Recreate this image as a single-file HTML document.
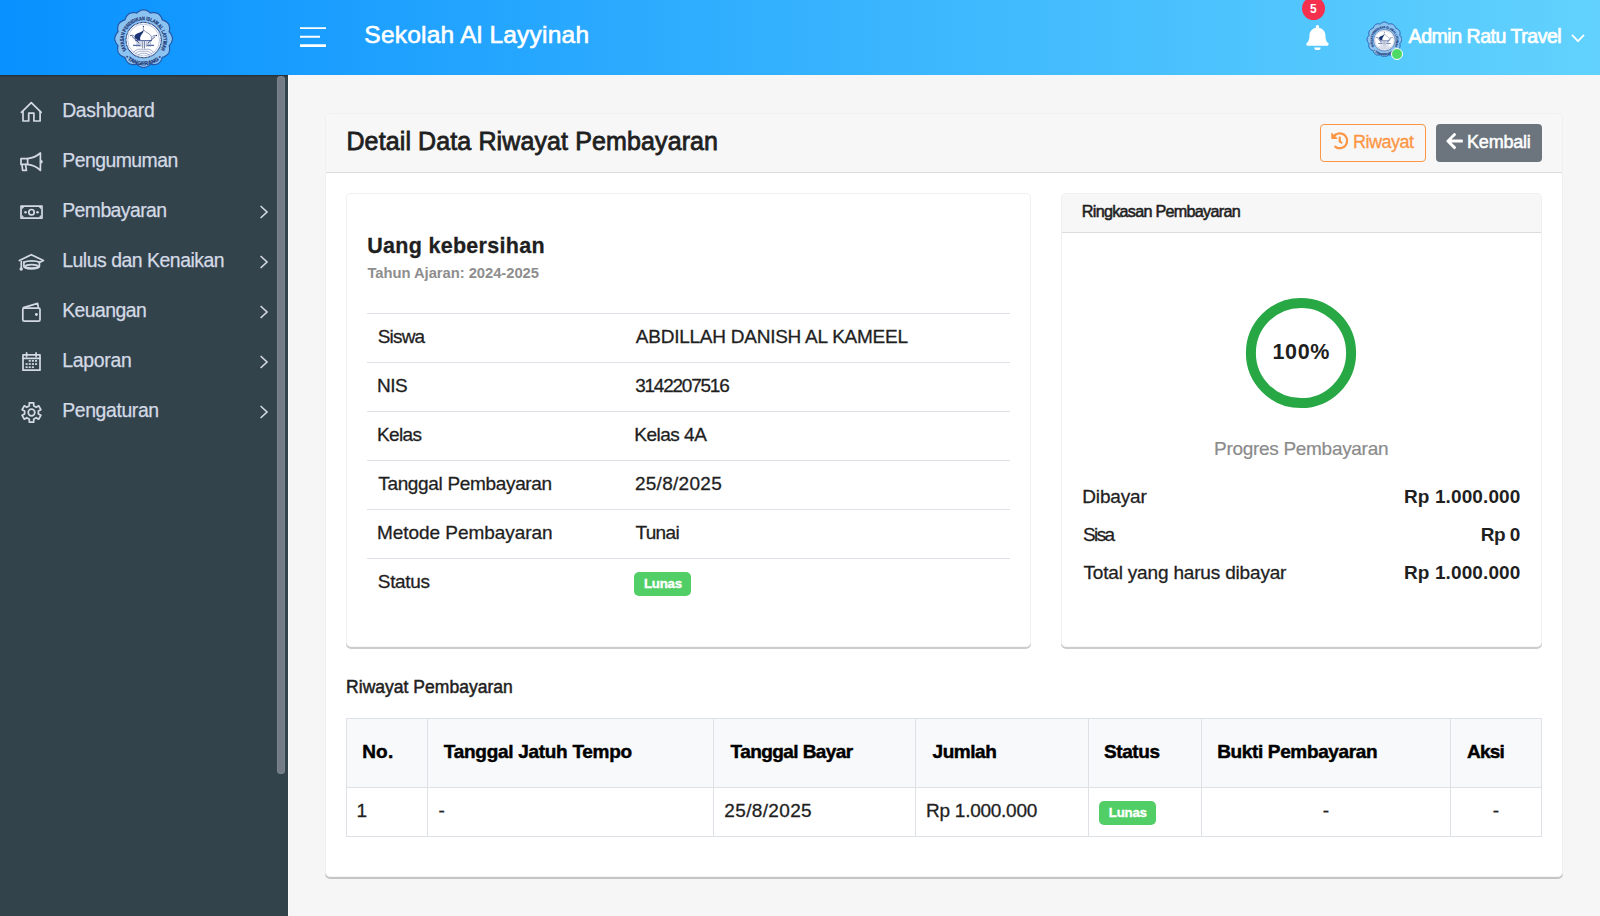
<!DOCTYPE html><html lang="id"><head><meta charset="utf-8"><title>Detail Data Riwayat Pembayaran - Sekolah Al Layyinah</title><style>
*{box-sizing:border-box;margin:0;padding:0}
html,body{width:1600px;height:916px;overflow:hidden}
body{position:relative;background:#f6f6f6;font-family:"Liberation Sans",sans-serif;color:#1f1f1f}
div,header,aside,main,section,nav,ul,li,a,span,h1,h2,h3,h4,p,svg,i,b{position:absolute;display:block}
ul{list-style:none}
table{position:absolute;border-collapse:separate;border-spacing:0;table-layout:fixed}
th,td{padding:0;text-align:left;font-weight:400}
.t{white-space:nowrap;line-height:1;font-weight:400;font-style:normal}
a{color:inherit;text-decoration:none}
.pb{position:static;display:inline-block;width:0;height:0}
#topbar{left:0;top:0;width:1600px;height:75px;background:linear-gradient(to right,#0891ff,#62d2fd);z-index:3}
#sidebar{left:0;top:75px;width:288px;height:841px;background:#33434c;box-shadow:inset 0 2px 2px -1px rgba(0,0,0,.32)}
#main{left:288px;top:75px;width:1312px;height:841px;border-left:1px solid #fbfbfb}
.card{background:#fff;border:1px solid #f0f0f0;border-bottom-color:#f6f6f6;border-radius:5px;box-shadow:0 2px 0 rgba(0,0,0,.2)}
.card-h{background:#f7f7f7;border-bottom:1px solid #dcdcdc;border-radius:4px 4px 0 0}
.hr{height:1px;background:#dee2e6}
.badge{background:#51cf66;border-radius:5px}
.tbl{border-left:1px solid #dee2e6;border-top:1px solid #dee2e6}
.tbl th,.tbl td{border-right:1px solid #dee2e6;border-bottom:1px solid #dee2e6}
.tbl th{background:#f8f9fa}
.dl td{border-top:1px solid #dee2e6}
</style></head><body><header id="topbar"><a class="brand" style="left:0;top:0;width:288px;height:75px"><svg style="left:113.47px;top:7.57px;width:61.27px;height:61.27px" viewBox="-30.63 -30.63 61.27 61.27"><path d="M0.00,-28.90 L0.50,-28.83 L1.00,-28.74 L1.50,-28.62 L1.99,-28.49 L2.48,-28.33 L2.96,-28.15 L3.43,-27.94 L3.90,-27.71 L4.35,-27.47 L4.80,-27.20 L5.23,-26.91 L5.65,-26.60 L6.06,-26.26 L6.46,-25.91 L6.84,-25.54 L7.36,-25.67 L7.88,-25.78 L8.40,-25.86 L8.92,-25.92 L9.45,-25.95 L9.97,-25.96 L10.48,-25.95 L11.00,-25.91 L11.51,-25.85 L12.02,-25.77 L12.52,-25.67 L13.01,-25.54 L13.50,-25.39 L13.98,-25.22 L14.45,-25.03 L14.85,-24.72 L15.24,-24.39 L15.61,-24.04 L15.97,-23.67 L16.31,-23.29 L16.63,-22.90 L16.94,-22.48 L17.23,-22.05 L17.50,-21.61 L17.75,-21.16 L17.98,-20.69 L18.19,-20.21 L18.38,-19.71 L18.55,-19.21 L18.70,-18.70 L19.21,-18.55 L19.71,-18.38 L20.21,-18.19 L20.69,-17.98 L21.16,-17.75 L21.61,-17.50 L22.05,-17.23 L22.48,-16.94 L22.90,-16.63 L23.29,-16.31 L23.67,-15.97 L24.04,-15.61 L24.39,-15.24 L24.72,-14.85 L25.03,-14.45 L25.22,-13.98 L25.39,-13.50 L25.54,-13.01 L25.67,-12.52 L25.77,-12.02 L25.85,-11.51 L25.91,-11.00 L25.95,-10.48 L25.96,-9.97 L25.95,-9.45 L25.92,-8.92 L25.86,-8.40 L25.78,-7.88 L25.67,-7.36 L25.54,-6.84 L25.91,-6.46 L26.26,-6.06 L26.60,-5.65 L26.91,-5.23 L27.20,-4.80 L27.47,-4.35 L27.71,-3.90 L27.94,-3.43 L28.15,-2.96 L28.33,-2.48 L28.49,-1.99 L28.62,-1.50 L28.74,-1.00 L28.83,-0.50 L28.90,-0.00 L28.83,0.50 L28.74,1.00 L28.62,1.50 L28.49,1.99 L28.33,2.48 L28.15,2.96 L27.94,3.43 L27.71,3.90 L27.47,4.35 L27.20,4.80 L26.91,5.23 L26.60,5.65 L26.26,6.06 L25.91,6.46 L25.54,6.84 L25.67,7.36 L25.78,7.88 L25.86,8.40 L25.92,8.92 L25.95,9.45 L25.96,9.97 L25.95,10.48 L25.91,11.00 L25.85,11.51 L25.77,12.02 L25.67,12.52 L25.54,13.01 L25.39,13.50 L25.22,13.98 L25.03,14.45 L24.72,14.85 L24.39,15.24 L24.04,15.61 L23.67,15.97 L23.29,16.31 L22.90,16.63 L22.48,16.94 L22.05,17.23 L21.61,17.50 L21.16,17.75 L20.69,17.98 L20.21,18.19 L19.71,18.38 L19.21,18.55 L18.70,18.70 L18.55,19.21 L18.38,19.71 L18.19,20.21 L17.98,20.69 L17.75,21.16 L17.50,21.61 L17.23,22.05 L16.94,22.48 L16.63,22.90 L16.31,23.29 L15.97,23.67 L15.61,24.04 L15.24,24.39 L14.85,24.72 L14.45,25.03 L13.98,25.22 L13.50,25.39 L13.01,25.54 L12.52,25.67 L12.02,25.77 L11.51,25.85 L11.00,25.91 L10.48,25.95 L9.97,25.96 L9.45,25.95 L8.92,25.92 L8.40,25.86 L7.88,25.78 L7.36,25.67 L6.84,25.54 L6.46,25.91 L6.06,26.26 L5.65,26.60 L5.23,26.91 L4.80,27.20 L4.35,27.47 L3.90,27.71 L3.43,27.94 L2.96,28.15 L2.48,28.33 L1.99,28.49 L1.50,28.62 L1.00,28.74 L0.50,28.83 L0.00,28.90 L-0.50,28.83 L-1.00,28.74 L-1.50,28.62 L-1.99,28.49 L-2.48,28.33 L-2.96,28.15 L-3.43,27.94 L-3.90,27.71 L-4.35,27.47 L-4.80,27.20 L-5.23,26.91 L-5.65,26.60 L-6.06,26.26 L-6.46,25.91 L-6.84,25.54 L-7.36,25.67 L-7.88,25.78 L-8.40,25.86 L-8.92,25.92 L-9.45,25.95 L-9.97,25.96 L-10.48,25.95 L-11.00,25.91 L-11.51,25.85 L-12.02,25.77 L-12.52,25.67 L-13.01,25.54 L-13.50,25.39 L-13.98,25.22 L-14.45,25.03 L-14.85,24.72 L-15.24,24.39 L-15.61,24.04 L-15.97,23.67 L-16.31,23.29 L-16.63,22.90 L-16.94,22.48 L-17.23,22.05 L-17.50,21.61 L-17.75,21.16 L-17.98,20.69 L-18.19,20.21 L-18.38,19.71 L-18.55,19.21 L-18.70,18.70 L-19.21,18.55 L-19.71,18.38 L-20.21,18.19 L-20.69,17.98 L-21.16,17.75 L-21.61,17.50 L-22.05,17.23 L-22.48,16.94 L-22.90,16.63 L-23.29,16.31 L-23.67,15.97 L-24.04,15.61 L-24.39,15.24 L-24.72,14.85 L-25.03,14.45 L-25.22,13.98 L-25.39,13.50 L-25.54,13.01 L-25.67,12.52 L-25.77,12.02 L-25.85,11.51 L-25.91,11.00 L-25.95,10.48 L-25.96,9.97 L-25.95,9.45 L-25.92,8.92 L-25.86,8.40 L-25.78,7.88 L-25.67,7.36 L-25.54,6.84 L-25.91,6.46 L-26.26,6.06 L-26.60,5.65 L-26.91,5.23 L-27.20,4.80 L-27.47,4.35 L-27.71,3.90 L-27.94,3.43 L-28.15,2.96 L-28.33,2.48 L-28.49,1.99 L-28.62,1.50 L-28.74,1.00 L-28.83,0.50 L-28.90,0.00 L-28.83,-0.50 L-28.74,-1.00 L-28.62,-1.50 L-28.49,-1.99 L-28.33,-2.48 L-28.15,-2.96 L-27.94,-3.43 L-27.71,-3.90 L-27.47,-4.35 L-27.20,-4.80 L-26.91,-5.23 L-26.60,-5.65 L-26.26,-6.06 L-25.91,-6.46 L-25.54,-6.84 L-25.67,-7.36 L-25.78,-7.88 L-25.86,-8.40 L-25.92,-8.92 L-25.95,-9.45 L-25.96,-9.97 L-25.95,-10.48 L-25.91,-11.00 L-25.85,-11.51 L-25.77,-12.02 L-25.67,-12.52 L-25.54,-13.01 L-25.39,-13.50 L-25.22,-13.98 L-25.03,-14.45 L-24.72,-14.85 L-24.39,-15.24 L-24.04,-15.61 L-23.67,-15.97 L-23.29,-16.31 L-22.90,-16.63 L-22.48,-16.94 L-22.05,-17.23 L-21.61,-17.50 L-21.16,-17.75 L-20.69,-17.98 L-20.21,-18.19 L-19.71,-18.38 L-19.21,-18.55 L-18.70,-18.70 L-18.55,-19.21 L-18.38,-19.71 L-18.19,-20.21 L-17.98,-20.69 L-17.75,-21.16 L-17.50,-21.61 L-17.23,-22.05 L-16.94,-22.48 L-16.63,-22.90 L-16.31,-23.29 L-15.97,-23.67 L-15.61,-24.04 L-15.24,-24.39 L-14.85,-24.72 L-14.45,-25.03 L-13.98,-25.22 L-13.50,-25.39 L-13.01,-25.54 L-12.52,-25.67 L-12.02,-25.77 L-11.51,-25.85 L-11.00,-25.91 L-10.48,-25.95 L-9.97,-25.96 L-9.45,-25.95 L-8.92,-25.92 L-8.40,-25.86 L-7.88,-25.78 L-7.36,-25.67 L-6.84,-25.54 L-6.46,-25.91 L-6.06,-26.26 L-5.65,-26.60 L-5.23,-26.91 L-4.80,-27.20 L-4.35,-27.47 L-3.90,-27.71 L-3.43,-27.94 L-2.96,-28.15 L-2.48,-28.33 L-1.99,-28.49 L-1.50,-28.62 L-1.00,-28.74 L-0.50,-28.83Z" fill="#8cc3f1" stroke="#2456a6" stroke-width="1.20" stroke-linejoin="round"/><circle cx="0" cy="1.40" r="17.60" fill="#fff" stroke="#1c3474" stroke-width="1.20" stroke-dasharray="0.90 0.50"/><circle cx="0" cy="1.40" r="15.90" fill="none" stroke="#6b86c0" stroke-width="0.45"/><defs><path id="lta" d="M-16.79,11.89 A19.80,19.80 0 1 1 16.79,11.89"/><path id="lba" d="M-18.43,18.59 A25.20,25.20 0 0 0 18.43,18.59"/></defs><text font-family="Liberation Sans, sans-serif" font-weight="700" font-size="5.20" fill="#1c3474" stroke="#1c3474" stroke-width="0.22"><textPath href="#lta" textLength="83.06" lengthAdjust="spacingAndGlyphs">YAYASAN PENDIDIKAN ISLAM AL LAYYINAH</textPath></text><text font-family="Liberation Sans, sans-serif" font-weight="700" font-size="5.30" fill="#1c3474" stroke="#1c3474" stroke-width="0.22"><textPath href="#lba" textLength="40.52" lengthAdjust="spacingAndGlyphs">• TANGERANG •</textPath></text><g transform="translate(0,1.40) scale(1.000)"><path d="M-0.1,-10.8 C-1.6,-6.4 -9.6,-7.6 -9,-2.8 C-8.7,-0.8 -6.6,0.2 -3.2,0 C-4.4,-2.6 -2.6,-5 -0.7,-7.4 C-0.1,-8.4 0,-9.6 -0.1,-10.8Z" fill="#1c3474"/><path d="M-0.2,-10.4 C2.2,-6.6 9.4,-6.6 7.6,-0.4" fill="none" stroke="#1c3474" stroke-width="0.5"/><path d="M-0.9,-14.6 l1.5,1.1 l-1.2,0.9z" fill="#1c3474"/><path d="M-0.3,-13 V-10.4" stroke="#1c3474" stroke-width="0.4"/><path d="M-8.4,0.6 H8.4" stroke="#51679f" stroke-width="1.1" fill="none"/><path d="M-10.6,5.4 H-3 M3,5.4 H10.4" stroke="#51679f" stroke-width="1.2" fill="none"/><path d="M-6.6,1.4 V7 M-4.6,1.4 V7 M-2.6,1.4 V7 M2.6,1.4 V7 M4.6,1.4 V7 M6.6,1.4 V7" stroke="#6d80b2" stroke-width="0.6" fill="none"/><path d="M-0.9,1.2 V8.6 M0.9,1.2 V8.6" stroke="#1c3474" stroke-width="0.6" fill="none"/><path d="M-11.6,-3.6 L-4.4,3.2 M11.4,-3.4 L4,3.4" stroke="#1c3474" stroke-width="0.8" fill="none"/><path d="M-12.2,-4.6 c1.4,-0.6 3,0.4 3.4,1.8 M12,-4.4 c-1.4,-0.6 -3,0.4 -3.4,1.8" stroke="#1c3474" stroke-width="0.6" fill="none"/><path d="M-10.4,12.6 C-7,8.4 -3,8.6 0,10 C3,8.6 7,8.4 10,12.6 M-8.4,14 C-5,10.6 -2,10.8 0,11.8 C2,10.8 5,10.6 8.2,14 M-6,15.2 C-3,13 -1.4,13 0,13.6 C1.4,13 3,13 6,15.2" stroke="#4a5f9a" stroke-width="0.5" fill="none"/><circle cx="-12.7" cy="-4.6" r="0.75" fill="#1c3474"/><circle cx="12.7" cy="-4.6" r="0.75" fill="#1c3474"/></g></svg></a><svg style="left:296px;top:22px;width:34px;height:30px;" viewBox="296 22 34 30"><path fill="#fff" d="M300,27.3h26v1.6h-26z M300,35.7h20v2h-20z M300,44.3h26v2.6h-26z"/></svg><h1 class="t" style="left:364.32px;top:23.00px;font-size:24.5px;letter-spacing:0.228px;color:#fff;-webkit-text-stroke:0.6px;">Sekolah Al Layyinah</h1><svg style="left:1305.8px;top:24.9px;width:22.9px;height:25.6px;" viewBox="0 0 448 512"><path fill="#fff" d="M224 512c35.32 0 63.97-28.65 63.97-64H160.03c0 35.35 28.65 64 63.97 64zm215.39-149.71c-19.32-20.76-55.47-51.99-55.47-154.29 0-77.7-54.48-139.9-127.94-155.16V32c0-17.67-14.32-32-31.98-32s-31.98 14.33-31.98 32v20.84C118.56 68.1 64.08 130.3 64.08 208c0 102.3-36.15 133.53-55.47 154.29-6 6.45-8.66 14.16-8.61 21.71.11 16.4 12.98 32 32.1 32h383.8c19.12 0 32-15.6 32.1-32 .05-7.55-2.61-15.27-8.61-21.71z"/></svg><div class="count" style="left:1301.9px;top:-2.6px;width:22.9px;height:22.9px;background:#f5304f;border-radius:50%"><span class="t" style="left:8.04px;top:5.60px;font-size:12px;font-weight:700;color:#fff;">5</span></div><svg style="left:1365.56px;top:20.56px;width:36.89px;height:36.89px" viewBox="-18.44 -18.44 36.89 36.89"><path d="M0.00,-17.40 L0.30,-17.36 L0.60,-17.30 L0.90,-17.23 L1.20,-17.15 L1.49,-17.06 L1.78,-16.95 L2.07,-16.82 L2.35,-16.69 L2.62,-16.54 L2.89,-16.38 L3.15,-16.20 L3.40,-16.01 L3.65,-15.81 L3.89,-15.60 L4.12,-15.38 L4.43,-15.46 L4.74,-15.52 L5.06,-15.57 L5.37,-15.60 L5.69,-15.62 L6.00,-15.63 L6.31,-15.62 L6.62,-15.60 L6.93,-15.57 L7.24,-15.52 L7.54,-15.45 L7.83,-15.38 L8.13,-15.29 L8.42,-15.18 L8.70,-15.07 L8.94,-14.88 L9.17,-14.68 L9.40,-14.47 L9.61,-14.25 L9.82,-14.02 L10.02,-13.78 L10.20,-13.54 L10.37,-13.28 L10.54,-13.01 L10.69,-12.74 L10.83,-12.46 L10.95,-12.17 L11.07,-11.87 L11.17,-11.57 L11.26,-11.26 L11.57,-11.17 L11.87,-11.07 L12.17,-10.95 L12.46,-10.83 L12.74,-10.69 L13.01,-10.54 L13.28,-10.37 L13.54,-10.20 L13.78,-10.02 L14.02,-9.82 L14.25,-9.61 L14.47,-9.40 L14.68,-9.17 L14.88,-8.94 L15.07,-8.70 L15.18,-8.42 L15.29,-8.13 L15.38,-7.83 L15.45,-7.54 L15.52,-7.24 L15.57,-6.93 L15.60,-6.62 L15.62,-6.31 L15.63,-6.00 L15.62,-5.69 L15.60,-5.37 L15.57,-5.06 L15.52,-4.74 L15.46,-4.43 L15.38,-4.12 L15.60,-3.89 L15.81,-3.65 L16.01,-3.40 L16.20,-3.15 L16.38,-2.89 L16.54,-2.62 L16.69,-2.35 L16.82,-2.07 L16.95,-1.78 L17.06,-1.49 L17.15,-1.20 L17.23,-0.90 L17.30,-0.60 L17.36,-0.30 L17.40,-0.00 L17.36,0.30 L17.30,0.60 L17.23,0.90 L17.15,1.20 L17.06,1.49 L16.95,1.78 L16.82,2.07 L16.69,2.35 L16.54,2.62 L16.38,2.89 L16.20,3.15 L16.01,3.40 L15.81,3.65 L15.60,3.89 L15.38,4.12 L15.46,4.43 L15.52,4.74 L15.57,5.06 L15.60,5.37 L15.62,5.69 L15.63,6.00 L15.62,6.31 L15.60,6.62 L15.57,6.93 L15.52,7.24 L15.45,7.54 L15.38,7.83 L15.29,8.13 L15.18,8.42 L15.07,8.70 L14.88,8.94 L14.68,9.17 L14.47,9.40 L14.25,9.61 L14.02,9.82 L13.78,10.02 L13.54,10.20 L13.28,10.37 L13.01,10.54 L12.74,10.69 L12.46,10.83 L12.17,10.95 L11.87,11.07 L11.57,11.17 L11.26,11.26 L11.17,11.57 L11.07,11.87 L10.95,12.17 L10.83,12.46 L10.69,12.74 L10.54,13.01 L10.37,13.28 L10.20,13.54 L10.02,13.78 L9.82,14.02 L9.61,14.25 L9.40,14.47 L9.17,14.68 L8.94,14.88 L8.70,15.07 L8.42,15.18 L8.13,15.29 L7.83,15.38 L7.54,15.45 L7.24,15.52 L6.93,15.57 L6.62,15.60 L6.31,15.62 L6.00,15.63 L5.69,15.62 L5.37,15.60 L5.06,15.57 L4.74,15.52 L4.43,15.46 L4.12,15.38 L3.89,15.60 L3.65,15.81 L3.40,16.01 L3.15,16.20 L2.89,16.38 L2.62,16.54 L2.35,16.69 L2.07,16.82 L1.78,16.95 L1.49,17.06 L1.20,17.15 L0.90,17.23 L0.60,17.30 L0.30,17.36 L0.00,17.40 L-0.30,17.36 L-0.60,17.30 L-0.90,17.23 L-1.20,17.15 L-1.49,17.06 L-1.78,16.95 L-2.07,16.82 L-2.35,16.69 L-2.62,16.54 L-2.89,16.38 L-3.15,16.20 L-3.40,16.01 L-3.65,15.81 L-3.89,15.60 L-4.12,15.38 L-4.43,15.46 L-4.74,15.52 L-5.06,15.57 L-5.37,15.60 L-5.69,15.62 L-6.00,15.63 L-6.31,15.62 L-6.62,15.60 L-6.93,15.57 L-7.24,15.52 L-7.54,15.45 L-7.83,15.38 L-8.13,15.29 L-8.42,15.18 L-8.70,15.07 L-8.94,14.88 L-9.17,14.68 L-9.40,14.47 L-9.61,14.25 L-9.82,14.02 L-10.02,13.78 L-10.20,13.54 L-10.37,13.28 L-10.54,13.01 L-10.69,12.74 L-10.83,12.46 L-10.95,12.17 L-11.07,11.87 L-11.17,11.57 L-11.26,11.26 L-11.57,11.17 L-11.87,11.07 L-12.17,10.95 L-12.46,10.83 L-12.74,10.69 L-13.01,10.54 L-13.28,10.37 L-13.54,10.20 L-13.78,10.02 L-14.02,9.82 L-14.25,9.61 L-14.47,9.40 L-14.68,9.17 L-14.88,8.94 L-15.07,8.70 L-15.18,8.42 L-15.29,8.13 L-15.38,7.83 L-15.45,7.54 L-15.52,7.24 L-15.57,6.93 L-15.60,6.62 L-15.62,6.31 L-15.63,6.00 L-15.62,5.69 L-15.60,5.37 L-15.57,5.06 L-15.52,4.74 L-15.46,4.43 L-15.38,4.12 L-15.60,3.89 L-15.81,3.65 L-16.01,3.40 L-16.20,3.15 L-16.38,2.89 L-16.54,2.62 L-16.69,2.35 L-16.82,2.07 L-16.95,1.78 L-17.06,1.49 L-17.15,1.20 L-17.23,0.90 L-17.30,0.60 L-17.36,0.30 L-17.40,0.00 L-17.36,-0.30 L-17.30,-0.60 L-17.23,-0.90 L-17.15,-1.20 L-17.06,-1.49 L-16.95,-1.78 L-16.82,-2.07 L-16.69,-2.35 L-16.54,-2.62 L-16.38,-2.89 L-16.20,-3.15 L-16.01,-3.40 L-15.81,-3.65 L-15.60,-3.89 L-15.38,-4.12 L-15.46,-4.43 L-15.52,-4.74 L-15.57,-5.06 L-15.60,-5.37 L-15.62,-5.69 L-15.63,-6.00 L-15.62,-6.31 L-15.60,-6.62 L-15.57,-6.93 L-15.52,-7.24 L-15.45,-7.54 L-15.38,-7.83 L-15.29,-8.13 L-15.18,-8.42 L-15.07,-8.70 L-14.88,-8.94 L-14.68,-9.17 L-14.47,-9.40 L-14.25,-9.61 L-14.02,-9.82 L-13.78,-10.02 L-13.54,-10.20 L-13.28,-10.37 L-13.01,-10.54 L-12.74,-10.69 L-12.46,-10.83 L-12.17,-10.95 L-11.87,-11.07 L-11.57,-11.17 L-11.26,-11.26 L-11.17,-11.57 L-11.07,-11.87 L-10.95,-12.17 L-10.83,-12.46 L-10.69,-12.74 L-10.54,-13.01 L-10.37,-13.28 L-10.20,-13.54 L-10.02,-13.78 L-9.82,-14.02 L-9.61,-14.25 L-9.40,-14.47 L-9.17,-14.68 L-8.94,-14.88 L-8.70,-15.07 L-8.42,-15.18 L-8.13,-15.29 L-7.83,-15.38 L-7.54,-15.45 L-7.24,-15.52 L-6.93,-15.57 L-6.62,-15.60 L-6.31,-15.62 L-6.00,-15.63 L-5.69,-15.62 L-5.37,-15.60 L-5.06,-15.57 L-4.74,-15.52 L-4.43,-15.46 L-4.12,-15.38 L-3.89,-15.60 L-3.65,-15.81 L-3.40,-16.01 L-3.15,-16.20 L-2.89,-16.38 L-2.62,-16.54 L-2.35,-16.69 L-2.07,-16.82 L-1.78,-16.95 L-1.49,-17.06 L-1.20,-17.15 L-0.90,-17.23 L-0.60,-17.30 L-0.30,-17.36Z" fill="#8cc3f1" stroke="#2456a6" stroke-width="1.00" stroke-linejoin="round"/><circle cx="0" cy="0.84" r="10.60" fill="#fff" stroke="#1c3474" stroke-width="0.72" stroke-dasharray="0.54 0.30"/><circle cx="0" cy="0.84" r="9.57" fill="none" stroke="#6b86c0" stroke-width="0.27"/><defs><path id="ltb" d="M-10.11,7.16 A11.92,11.92 0 1 1 10.11,7.16"/><path id="lbb" d="M-11.10,11.19 A15.17,15.17 0 0 0 11.10,11.19"/></defs><text font-family="Liberation Sans, sans-serif" font-weight="700" font-size="3.13" fill="#1c3474" stroke="#1c3474" stroke-width="0.13"><textPath href="#ltb" textLength="50.01" lengthAdjust="spacingAndGlyphs">YAYASAN PENDIDIKAN ISLAM AL LAYYINAH</textPath></text><text font-family="Liberation Sans, sans-serif" font-weight="700" font-size="3.19" fill="#1c3474" stroke="#1c3474" stroke-width="0.13"><textPath href="#lbb" textLength="24.39" lengthAdjust="spacingAndGlyphs">• TANGERANG •</textPath></text><g transform="translate(0,0.84) scale(0.602)"><path d="M-0.1,-10.8 C-1.6,-6.4 -9.6,-7.6 -9,-2.8 C-8.7,-0.8 -6.6,0.2 -3.2,0 C-4.4,-2.6 -2.6,-5 -0.7,-7.4 C-0.1,-8.4 0,-9.6 -0.1,-10.8Z" fill="#1c3474"/><path d="M-0.2,-10.4 C2.2,-6.6 9.4,-6.6 7.6,-0.4" fill="none" stroke="#1c3474" stroke-width="0.5"/><path d="M-0.9,-14.6 l1.5,1.1 l-1.2,0.9z" fill="#1c3474"/><path d="M-0.3,-13 V-10.4" stroke="#1c3474" stroke-width="0.4"/><path d="M-8.4,0.6 H8.4" stroke="#51679f" stroke-width="1.1" fill="none"/><path d="M-10.6,5.4 H-3 M3,5.4 H10.4" stroke="#51679f" stroke-width="1.2" fill="none"/><path d="M-6.6,1.4 V7 M-4.6,1.4 V7 M-2.6,1.4 V7 M2.6,1.4 V7 M4.6,1.4 V7 M6.6,1.4 V7" stroke="#6d80b2" stroke-width="0.6" fill="none"/><path d="M-0.9,1.2 V8.6 M0.9,1.2 V8.6" stroke="#1c3474" stroke-width="0.6" fill="none"/><path d="M-11.6,-3.6 L-4.4,3.2 M11.4,-3.4 L4,3.4" stroke="#1c3474" stroke-width="0.8" fill="none"/><path d="M-12.2,-4.6 c1.4,-0.6 3,0.4 3.4,1.8 M12,-4.4 c-1.4,-0.6 -3,0.4 -3.4,1.8" stroke="#1c3474" stroke-width="0.6" fill="none"/><path d="M-10.4,12.6 C-7,8.4 -3,8.6 0,10 C3,8.6 7,8.4 10,12.6 M-8.4,14 C-5,10.6 -2,10.8 0,11.8 C2,10.8 5,10.6 8.2,14 M-6,15.2 C-3,13 -1.4,13 0,13.6 C1.4,13 3,13 6,15.2" stroke="#4a5f9a" stroke-width="0.5" fill="none"/><circle cx="-12.7" cy="-4.6" r="0.75" fill="#1c3474"/><circle cx="12.7" cy="-4.6" r="0.75" fill="#1c3474"/></g></svg><div style="left:1390.8px;top:47.8px;width:12.4px;height:12.4px;background:#4cd964;border:1.4px solid #fff;border-radius:50%"></div><span class="t" style="left:1408.61px;top:27.00px;font-size:19.5px;letter-spacing:-0.461px;color:#fff;-webkit-text-stroke:0.7px;">Admin Ratu Travel</span><svg style="left:1568px;top:30px;width:20px;height:16px;" viewBox="1568 30 20 16"><path fill="none" stroke="#fff" stroke-width="1.7" d="M1572,34.9 L1578,41.2 L1584,34.9"/></svg></header><aside id="sidebar"><nav style="left:0;top:0;width:288px;height:841px"><ul style="left:0;top:0;width:277px;height:841px"><li style="left:0;top:11px;width:277px;height:50px"><a class="item" style="left:0;top:0;width:277px;height:50px"><svg style="left:10px;top:0px;width:40px;height:50px;" viewBox="10 86 40 50"><path fill="none" stroke="#d3dae5" stroke-width="1.7" stroke-linejoin="round" stroke-linecap="round" d="M21.4,112.3 L31.3,102.7 L41.2,112.3"/><path fill="none" stroke="#d3dae5" stroke-width="1.7" stroke-linejoin="round" stroke-linecap="round" d="M23,111.6 V121 H28.7 V113.2 H33.9 V121 H40.1 V111.6"/></svg><span class="t" style="left:62.13px;top:15.00px;font-size:19.4px;letter-spacing:-0.290px;color:#d3dae5;-webkit-text-stroke:0.25px;">Dashboard</span></a></li><li style="left:0;top:61px;width:277px;height:50px"><a class="item" style="left:0;top:0;width:277px;height:50px"><svg style="left:10px;top:0px;width:40px;height:50px;" viewBox="10 136 40 50"><path fill="none" stroke="#d3dae5" stroke-width="1.7" stroke-linejoin="round" stroke-linecap="round" stroke-width="1.5" d="M21,158.6 H27.6 V164.4 H21 Z"/><path fill="none" stroke="#d3dae5" stroke-width="1.7" stroke-linejoin="round" stroke-linecap="round" stroke-width="1.5" d="M27.6,158.6 C33,158 37,156 40.4,153 V170.4 C37,167.2 33,165 27.6,164.4"/><path fill="none" stroke="#d3dae5" stroke-width="1.7" stroke-linejoin="round" stroke-linecap="round" stroke-width="1.5" d="M22,164.6 L22.6,170.4 H26.4 L25.6,164.6"/><path fill="#d3dae5" d="M41,159.9 a1.8,1.8 0 0 1 0,3.6z"/></svg><span class="t" style="left:62.23px;top:15.00px;font-size:19.4px;letter-spacing:-0.522px;color:#d3dae5;-webkit-text-stroke:0.25px;">Pengumuman</span></a></li><li style="left:0;top:111px;width:277px;height:50px"><a class="item" style="left:0;top:0;width:277px;height:50px"><svg style="left:10px;top:0px;width:40px;height:50px;" viewBox="10 186 40 50"><rect fill="none" stroke="#d3dae5" stroke-width="1.7" stroke-linejoin="round" stroke-linecap="round" stroke-width="1.9" x="21" y="206.1" width="21" height="12"/><circle fill="none" stroke="#d3dae5" stroke-width="1.7" stroke-linejoin="round" stroke-linecap="round" stroke-width="1.4" cx="31.5" cy="212.2" r="2.7"/><circle fill="#d3dae5" cx="25.5" cy="212.2" r="1.25"/><circle fill="#d3dae5" cx="37.5" cy="212.2" r="1.25"/><path fill="#d3dae5" d="M22,207 h2.2 l-2.2,2.2z M41,207 h-2.2 l2.2,2.2z M22,217.3 h2.2 l-2.2,-2.2z M41,217.3 h-2.2 l2.2,-2.2z"/></svg><span class="t" style="left:62.23px;top:15.00px;font-size:19.4px;letter-spacing:-0.568px;color:#d3dae5;-webkit-text-stroke:0.25px;">Pembayaran</span><svg style="left:256px;top:17.4px;width:16px;height:18px;" viewBox="0 0 16 18"><path fill="none" stroke="#d3dae5" stroke-width="1.6" d="M4.6,3 L11,9 L4.6,15"/></svg></a></li><li style="left:0;top:161px;width:277px;height:50px"><a class="item" style="left:0;top:0;width:277px;height:50px"><svg style="left:10px;top:0px;width:40px;height:50px;" viewBox="10 236 40 50"><path fill="none" stroke="#d3dae5" stroke-width="1.7" stroke-linejoin="round" stroke-linecap="round" stroke-width="1.5" d="M19.4,260.6 L31.3,254.7 L43.4,260.6 L39.4,262.5"/><path fill="none" stroke="#d3dae5" stroke-width="1.7" stroke-linejoin="round" stroke-linecap="round" stroke-width="1.5" d="M23.9,262 V266.6 C23.9,269.6 39.4,269.6 39.4,266.6 V262"/><ellipse fill="none" stroke="#d3dae5" stroke-width="1.7" stroke-linejoin="round" stroke-linecap="round" stroke-width="1.3" cx="31.65" cy="266.4" rx="6.6" ry="1.7"/><path fill="none" stroke="#d3dae5" stroke-width="1.7" stroke-linejoin="round" stroke-linecap="round" stroke-width="1.3" d="M24.2,262.3 C27,260.3 36.3,260.3 39.2,262.3"/><path fill="none" stroke="#d3dae5" stroke-width="1.7" stroke-linejoin="round" stroke-linecap="round" stroke-width="1.5" d="M21.3,261.5 V268"/><circle fill="#d3dae5" cx="21.2" cy="269" r="1.7"/></svg><span class="t" style="left:62.23px;top:15.00px;font-size:19.4px;letter-spacing:-0.466px;color:#d3dae5;-webkit-text-stroke:0.25px;">Lulus dan Kenaikan</span><svg style="left:256px;top:17.4px;width:16px;height:18px;" viewBox="0 0 16 18"><path fill="none" stroke="#d3dae5" stroke-width="1.6" d="M4.6,3 L11,9 L4.6,15"/></svg></a></li><li style="left:0;top:211px;width:277px;height:50px"><a class="item" style="left:0;top:0;width:277px;height:50px"><svg style="left:10px;top:0px;width:40px;height:50px;" viewBox="10 286 40 50"><rect fill="none" stroke="#d3dae5" stroke-width="1.7" stroke-linejoin="round" stroke-linecap="round" stroke-width="1.8" x="22.8" y="308.1" width="17.2" height="13.1" rx="1.4"/><path fill="none" stroke="#d3dae5" stroke-width="1.7" stroke-linejoin="round" stroke-linecap="round" stroke-width="1.5" d="M23.4,307.6 L37.6,303.4 L38.3,307.4"/><circle fill="#d3dae5" cx="36.4" cy="314.5" r="1.45"/></svg><span class="t" style="left:62.23px;top:15.00px;font-size:19.4px;letter-spacing:-0.555px;color:#d3dae5;-webkit-text-stroke:0.25px;">Keuangan</span><svg style="left:256px;top:17.4px;width:16px;height:18px;" viewBox="0 0 16 18"><path fill="none" stroke="#d3dae5" stroke-width="1.6" d="M4.6,3 L11,9 L4.6,15"/></svg></a></li><li style="left:0;top:261px;width:277px;height:50px"><a class="item" style="left:0;top:0;width:277px;height:50px"><svg style="left:10px;top:0px;width:40px;height:50px;" viewBox="10 336 40 50"><rect fill="none" stroke="#d3dae5" stroke-width="1.7" stroke-linejoin="round" stroke-linecap="round" stroke-width="1.8" stroke-linejoin="miter" x="23" y="354.9" width="17" height="15.3"/><path fill="none" stroke="#d3dae5" stroke-width="1.7" stroke-linejoin="round" stroke-linecap="round" stroke-width="1.4" d="M23,358.3 H40"/><path fill="none" stroke="#d3dae5" stroke-width="1.7" stroke-linejoin="round" stroke-linecap="round" stroke-width="1.5" d="M26.6,352.9 V356.6 M36.05,352.9 V356.6"/><rect x="28.70" y="360.05" width="2.1" height="1.7" fill="#d3dae5"/><rect x="31.85" y="360.05" width="2.1" height="1.7" fill="#d3dae5"/><rect x="35.00" y="360.05" width="2.1" height="1.7" fill="#d3dae5"/><rect x="25.55" y="363.20" width="2.1" height="1.7" fill="#d3dae5"/><rect x="28.70" y="363.20" width="2.1" height="1.7" fill="#d3dae5"/><rect x="31.85" y="363.20" width="2.1" height="1.7" fill="#d3dae5"/><rect x="35.00" y="363.20" width="2.1" height="1.7" fill="#d3dae5"/><rect x="25.55" y="366.35" width="2.1" height="1.7" fill="#d3dae5"/><rect x="28.70" y="366.35" width="2.1" height="1.7" fill="#d3dae5"/><rect x="31.85" y="366.35" width="2.1" height="1.7" fill="#d3dae5"/></svg><span class="t" style="left:62.23px;top:15.00px;font-size:19.4px;letter-spacing:-0.253px;color:#d3dae5;-webkit-text-stroke:0.25px;">Laporan</span><svg style="left:256px;top:17.4px;width:16px;height:18px;" viewBox="0 0 16 18"><path fill="none" stroke="#d3dae5" stroke-width="1.6" d="M4.6,3 L11,9 L4.6,15"/></svg></a></li><li style="left:0;top:311px;width:277px;height:50px"><a class="item" style="left:0;top:0;width:277px;height:50px"><svg style="left:10px;top:0px;width:40px;height:50px;" viewBox="10 386 40 50"><path fill="none" stroke="#d3dae5" stroke-width="1.7" stroke-linejoin="round" stroke-linecap="round" stroke-width="1.5" d="M29.34,405.84 L29.26,402.96 L33.74,402.96 L33.66,405.84 L36.18,407.30 L38.64,405.79 L40.88,409.67 L38.35,411.04 L38.35,413.96 L40.88,415.33 L38.64,419.21 L36.18,417.70 L33.66,419.16 L33.74,422.04 L29.26,422.04 L29.34,419.16 L26.82,417.70 L24.36,419.21 L22.12,415.33 L24.65,413.96 L24.65,411.04 L22.12,409.67 L24.36,405.79 L26.82,407.30Z"/><circle fill="none" stroke="#d3dae5" stroke-width="1.7" stroke-linejoin="round" stroke-linecap="round" stroke-width="1.5" cx="31.5" cy="412.5" r="3.3"/></svg><span class="t" style="left:62.23px;top:15.00px;font-size:19.4px;letter-spacing:-0.380px;color:#d3dae5;-webkit-text-stroke:0.25px;">Pengaturan</span><svg style="left:256px;top:17.4px;width:16px;height:18px;" viewBox="0 0 16 18"><path fill="none" stroke="#d3dae5" stroke-width="1.6" d="M4.6,3 L11,9 L4.6,15"/></svg></a></li></ul></nav><div class="thumb" style="left:277px;top:0.5px;width:8px;height:698px;background:#737b84;border-radius:4px;box-shadow:inset 0 0 0 1px #7b838c"></div></aside><main id="main"><section class="card" style="left:36px;top:38px;width:1237.6px;height:764px;"><div class="card-h" style="left:0px;top:0px;width:1235.6px;height:59px;"><h2 class="t" style="left:20.45px;top:15.00px;font-size:25px;letter-spacing:0.116px;color:#1f1f1f;-webkit-text-stroke:0.8px;">Detail Data Riwayat Pembayaran</h2><a class="btn" style="left:994px;top:10px;width:106px;height:38px;border:1px solid #fd9644;border-radius:4px"><svg style="left:9.8px;top:7.3px;width:17.5px;height:17.6px;" viewBox="0 0 512 512"><path fill="#fd9644" d="M504 255.531c.253 136.64-111.18 248.372-247.82 248.468-59.015.042-113.223-20.53-155.822-54.911-11.077-8.94-11.905-25.541-1.839-35.607l11.267-11.267c8.609-8.609 22.353-9.551 31.891-1.984C173.062 425.135 212.781 440 256 440c101.705 0 184-82.311 184-184 0-101.705-82.311-184-184-184-48.814 0-93.149 18.969-126.068 49.932l50.754 50.754c10.08 10.08 2.941 27.314-11.313 27.314H24c-8.837 0-16-7.163-16-16V38.627c0-14.254 17.234-21.393 27.314-11.314l49.372 49.372C129.209 34.136 189.552 8 256 8c136.81 0 247.747 110.78 248 247.531zm-180.912 78.784l9.823-12.63c8.138-10.463 6.253-25.542-4.21-33.679L288 256.349V152c0-13.255-10.745-24-24-24h-16c-13.255 0-24 10.745-24 24v135.651l65.409 50.874c10.463 8.137 25.541 6.253 33.679-4.21z"/></svg><span class="t" style="left:31.97px;top:8.00px;font-size:18px;letter-spacing:-0.504px;color:#fd9644;-webkit-text-stroke:0.3px;">Riwayat</span></a><a class="btn" style="left:1110px;top:10px;width:106px;height:38px;background:#6c757d;border-radius:4px"><svg style="left:10px;top:8.9px;width:17.2px;height:16.2px;overflow:visible" viewBox="0 37 448 438"><path fill="#fff" d="M257.5 445.1l-22.2 22.2c-9.4 9.4-24.6 9.4-33.9 0L7 273c-9.4-9.4-9.4-24.6 0-33.9L201.4 44.700c9.4-9.4 24.6-9.4 33.9 0l22.2 22.2c9.500 9.500 9.300 25-.4 34.300L136.600 216H424c13.300 0 24 10.700 24 24v32c0 13.300-10.700 24-24 24H136.600l120.500 114.800c9.800 9.300 10 24.800.4 34.300z"/></svg><span class="t" style="left:31.07px;top:9.00px;font-size:18px;letter-spacing:-0.209px;color:#fff;-webkit-text-stroke:0.5px;">Kembali</span></a></div><section class="card" style="left:20px;top:79px;width:684.6px;height:454px;"><h3 class="t" style="left:20.26px;top:42.00px;font-size:21.5px;letter-spacing:0.288px;font-weight:700;color:#1f1f1f;-webkit-text-stroke:0.3px;">Uang kebersihan</h3><p class="t" style="left:20.45px;top:72.00px;font-size:14.8px;letter-spacing:-0.051px;font-weight:700;color:#8e8e8e;">Tahun Ajaran: 2024-2025</p><table class="dl" style="left:20px;top:119px;width:643px;height:294px"><tbody><tr style="height:49px"><td style="width:268px"><span class="t" style="left:10.81px;top:14.00px;font-size:19px;letter-spacing:-0.849px;color:#1f1f1f;-webkit-text-stroke:0.3px;">Siswa</span></td><td><span class="t" style="left:268.81px;top:14.00px;font-size:19px;letter-spacing:-0.243px;color:#1f1f1f;-webkit-text-stroke:0.3px;">ABDILLAH DANISH AL KAMEEL</span></td></tr><tr style="height:49px"><td style="width:268px"><span class="t" style="left:10.09px;top:63.00px;font-size:19px;letter-spacing:-0.530px;color:#1f1f1f;-webkit-text-stroke:0.3px;">NIS</span></td><td><span class="t" style="left:268.13px;top:63.00px;font-size:19px;letter-spacing:-1.229px;color:#1f1f1f;-webkit-text-stroke:0.3px;">3142207516</span></td></tr><tr style="height:49px"><td style="width:268px"><span class="t" style="left:10.09px;top:112.00px;font-size:19px;letter-spacing:-0.674px;color:#1f1f1f;-webkit-text-stroke:0.3px;">Kelas</span></td><td><span class="t" style="left:267.29px;top:112.00px;font-size:19px;letter-spacing:-0.497px;color:#1f1f1f;-webkit-text-stroke:0.3px;">Kelas 4A</span></td></tr><tr style="height:49px"><td style="width:268px"><span class="t" style="left:11.23px;top:161.00px;font-size:19px;letter-spacing:-0.330px;color:#1f1f1f;-webkit-text-stroke:0.3px;">Tanggal Pembayaran</span></td><td><span class="t" style="left:267.90px;top:161.00px;font-size:19px;letter-spacing:0.287px;color:#1f1f1f;-webkit-text-stroke:0.3px;">25/8/2025</span></td></tr><tr style="height:49px"><td style="width:268px"><span class="t" style="left:10.09px;top:210.00px;font-size:19px;letter-spacing:-0.058px;color:#1f1f1f;-webkit-text-stroke:0.3px;">Metode Pembayaran</span></td><td><span class="t" style="left:268.43px;top:210.00px;font-size:19px;letter-spacing:-0.636px;color:#1f1f1f;-webkit-text-stroke:0.3px;">Tunai</span></td></tr><tr style="height:49px"><td style="width:268px"><span class="t" style="left:10.81px;top:259.00px;font-size:19px;letter-spacing:-0.333px;color:#1f1f1f;-webkit-text-stroke:0.3px;">Status</span></td><td><span class="badge" style="left:267.1px;top:259px;width:56.6px;height:24px;"><span class="t" style="left:9.90px;top:5.00px;font-size:13.3px;letter-spacing:-0.249px;font-weight:700;color:#fff;-webkit-text-stroke:0.35px;">Lunas</span></span></td></tr></tbody></table></section><section class="card" style="left:735px;top:79px;width:480.7px;height:454px;"><div class="card-h" style="left:0px;top:0px;width:478.7px;height:38.6px;"><h4 class="t" style="left:19.85px;top:9.00px;font-size:16.2px;letter-spacing:-0.735px;color:#1f1f1f;-webkit-text-stroke:0.55px;">Ringkasan Pembayaran</h4></div><svg style="left:179px;top:99.4px;width:120px;height:120px;" viewBox="-60 -60 120 120"><circle cx="0" cy="0" r="50.1" fill="none" stroke="#28a745" stroke-width="10"/></svg><span class="t" style="left:210.47px;top:148.00px;font-size:21.5px;letter-spacing:0.665px;font-weight:700;color:#1f1f1f;">100%</span><span class="t" style="left:152.04px;top:245.00px;font-size:19px;letter-spacing:-0.299px;color:#8b8b8b;-webkit-text-stroke:0.2px;">Progres Pembayaran</span><span class="t" style="left:20.29px;top:293.00px;font-size:19px;letter-spacing:-0.169px;color:#1f1f1f;-webkit-text-stroke:0.3px;">Dibayar</span><span class="t" style="left:341.95px;top:293.00px;font-size:19px;letter-spacing:0.116px;font-weight:700;color:#1f1f1f;">Rp 1.000.000</span><span class="t" style="left:21.01px;top:331.00px;font-size:19px;letter-spacing:-1.592px;color:#1f1f1f;-webkit-text-stroke:0.3px;">Sisa</span><span class="t" style="left:418.75px;top:331.00px;font-size:19px;letter-spacing:-0.513px;font-weight:700;color:#1f1f1f;">Rp 0</span><span class="t" style="left:21.43px;top:369.00px;font-size:19px;letter-spacing:-0.174px;color:#1f1f1f;-webkit-text-stroke:0.3px;">Total yang harus dibayar</span><span class="t" style="left:341.95px;top:369.00px;font-size:19px;letter-spacing:0.116px;font-weight:700;color:#1f1f1f;">Rp 1.000.000</span></section><h4 class="t" style="left:20.12px;top:565.00px;font-size:17.5px;letter-spacing:0.020px;color:#1f1f1f;-webkit-text-stroke:0.5px;">Riwayat Pembayaran</h4><table class="tbl" style="left:20px;top:604px;width:1196px;height:119px"><thead><tr style="height:69px"><th style="width:81px"><span class="t" style="left:15.17px;top:23.00px;font-size:19px;letter-spacing:0.234px;font-weight:700;color:#000;-webkit-text-stroke:0.45px;">No.</span></th><th style="width:286px"><span class="t" style="left:96.84px;top:23.00px;font-size:19px;letter-spacing:-0.291px;font-weight:700;color:#000;-webkit-text-stroke:0.45px;">Tanggal Jatuh Tempo</span></th><th style="width:202px"><span class="t" style="left:383.53px;top:23.00px;font-size:19px;letter-spacing:-0.570px;font-weight:700;color:#000;-webkit-text-stroke:0.45px;">Tanggal Bayar</span></th><th style="width:173px"><span class="t" style="left:585.56px;top:23.00px;font-size:19px;letter-spacing:-0.449px;font-weight:700;color:#000;-webkit-text-stroke:0.45px;">Jumlah</span></th><th style="width:113px"><span class="t" style="left:756.99px;top:23.00px;font-size:19px;letter-spacing:-0.404px;font-weight:700;color:#000;-webkit-text-stroke:0.45px;">Status</span></th><th style="width:249px"><span class="t" style="left:870.17px;top:23.00px;font-size:19px;letter-spacing:-0.354px;font-weight:700;color:#000;-webkit-text-stroke:0.45px;">Bukti Pembayaran</span></th><th style="width:91px"><span class="t" style="left:1119.97px;top:23.00px;font-size:19px;letter-spacing:-0.764px;font-weight:700;color:#000;-webkit-text-stroke:0.45px;">Aksi</span></th></tr></thead><tbody><tr style="height:49px"><td><span class="t" style="left:9.51px;top:82.00px;font-size:19px;color:#1f1f1f;-webkit-text-stroke:0.3px;">1</span></td><td><span class="t" style="left:91.61px;top:82.00px;font-size:19px;color:#1f1f1f;-webkit-text-stroke:0.3px;">-</span></td><td><span class="t" style="left:377.30px;top:82.00px;font-size:19px;letter-spacing:0.350px;color:#1f1f1f;-webkit-text-stroke:0.3px;">25/8/2025</span></td><td><span class="t" style="left:579.09px;top:82.00px;font-size:19px;letter-spacing:-0.263px;color:#1f1f1f;-webkit-text-stroke:0.3px;">Rp 1.000.000</span></td><td><span class="badge" style="left:751.9px;top:81.7px;width:56.9px;height:24px;"><span class="t" style="left:9.90px;top:5.30px;font-size:13.3px;letter-spacing:-0.249px;font-weight:700;color:#fff;-webkit-text-stroke:0.35px;">Lunas</span></span></td><td><span class="t" style="left:975.63px;top:82.00px;font-size:19px;color:#1f1f1f;-webkit-text-stroke:0.3px;">-</span></td><td><span class="t" style="left:1145.63px;top:82.00px;font-size:19px;color:#1f1f1f;-webkit-text-stroke:0.3px;">-</span></td></tr></tbody></table></section></main></body></html>
